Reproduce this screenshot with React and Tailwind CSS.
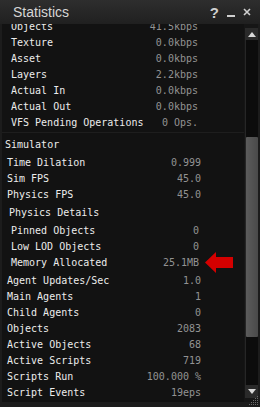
import { useState } from "react";

const network = [
  ["Objects", "41.5kbps"],
  ["Texture", "0.0kbps"],
  ["Asset", "0.0kbps"],
  ["Layers", "2.2kbps"],
  ["Actual In", "0.0kbps"],
  ["Actual Out", "0.0kbps"],
  ["VFS Pending Operations", "0 Ops."],
];

const simTop = [
  ["Time Dilation", "0.999"],
  ["Sim FPS", "45.0"],
  ["Physics FPS", "45.0"],
];

const physics = [
  ["Pinned Objects", "0"],
  ["Low LOD Objects", "0"],
  ["Memory Allocated", "25.1MB"],
];

const simBottom = [
  ["Agent Updates/Sec", "1.0"],
  ["Main Agents", "1"],
  ["Child Agents", "0"],
  ["Objects", "2083"],
  ["Active Objects", "68"],
  ["Active Scripts", "719"],
  ["Scripts Run", "100.000 %"],
  ["Script Events", "19eps"],
];

function Row({ label, value, pl, pr }) {
  return (
    <div className={`flex justify-between h-[16px] leading-[16px] ${pl} ${pr}`}>
      <span className="text-[#ececec]">{label}</span>
      <span className="text-[#929292]">{value}</span>
    </div>
  );
}

export default function App() {
  const [open] = useState(true);

  return (
    <div className="relative w-[260px] h-[407px] bg-[#1c1c1c] flex flex-col overflow-hidden">
      {/* Title bar */}
      <div className="h-[24px] shrink-0 flex items-center justify-between pl-[13px] pr-[9px] bg-gradient-to-b from-[#2e2e2e] to-[#202020]">
        <span className="text-[14px] text-[#d6d6d6] font-['Liberation_Sans',sans-serif] leading-none">
          Statistics
        </span>
        <div className="flex items-center gap-[8px] text-[#cfcfcf] font-['Liberation_Sans',sans-serif]">
          <span className="text-[15px] font-bold leading-none">?</span>
          <span className="w-[8px] h-[2px] bg-[#cfcfcf] mt-[8px]" />
          <svg width="8" height="8" viewBox="0 0 8 8">
            <path d="M1 1L7 7M7 1L1 7" stroke="#cfcfcf" strokeWidth="1.6" />
          </svg>
        </div>
      </div>

      {/* Body */}
      <div className="flex flex-1 min-h-0 pl-[2px] pb-[5px]">
        <div className="relative w-[242px] bg-[#121212] overflow-hidden font-['DejaVu_Sans_Mono',monospace] text-[10px]">
          <div className="mt-[-5px]">
            {/* Network */}
            <div className="flex flex-col">
              {network.map(([l, v]) => (
                <Row key={l} label={l} value={v} pl="pl-[9px]" pr="pr-[46px]" />
              ))}
            </div>

            {/* Simulator */}
            {open && (
              <div className="mt-[1px] border-t border-[#1e1e1e] pt-[4px]">
                <div className="h-[16px] leading-[16px] pl-[3px] text-[#ececec]">Simulator</div>
                <div className="pt-[2px]">
                  {simTop.map(([l, v]) => (
                    <Row key={l} label={l} value={v} pl="pl-[5px]" pr="pr-[43px]" />
                  ))}
                </div>
                <div className="mt-[2px]">
                  <div className="h-[16px] leading-[16px] pl-[7px] text-[#ececec]">Physics Details</div>
                  <div className="pt-[2px]">
                    {physics.map(([l, v]) => (
                      <Row key={l} label={l} value={v} pl="pl-[9px]" pr="pr-[45px]" />
                    ))}
                  </div>
                </div>
                <div className="pt-[2px]">
                  {simBottom.map(([l, v]) => (
                    <Row key={l} label={l} value={v} pl="pl-[5px]" pr="pr-[43px]" />
                  ))}
                </div>
              </div>
            )}
          </div>

          {/* Red annotation arrow */}
          <svg
            className="absolute left-[203px] top-[228px]"
            width="28"
            height="21"
            viewBox="0 0 28 21"
          >
            <path d="M0 10.5L11 0V5H28V16H11V21Z" fill="#d40000" />
          </svg>
        </div>

        {/* Scrollbar */}
        <div className="relative w-[14px] flex flex-col pl-[1px] pt-[4px] bg-[#161616]">
          <div className="h-[12px] flex items-center justify-center bg-[#2a2a2a]">
            <svg width="8" height="5" viewBox="0 0 8 5">
              <path d="M0 5L4 0L8 5Z" fill="#d8d8d8" />
            </svg>
          </div>
          <div className="flex-1 flex flex-col bg-[#0c0c0c] border-l border-[#262626]">
            <div className="h-[97px]" />
            <div className="h-[200px] bg-gradient-to-r from-[#5c5c5c] to-[#4a4a4a] rounded-[1px]" />
          </div>
          <div className="h-[13px] mb-[4px] flex items-center justify-center bg-[#2a2a2a]">
            <svg width="8" height="5" viewBox="0 0 8 5">
              <path d="M0 0L8 0L4 5Z" fill="#d8d8d8" />
            </svg>
          </div>
        </div>
      </div>

      {/* Resize grip */}
      <svg className="absolute left-[249px] top-[396px]" width="10" height="10" viewBox="0 0 10 10">
        {[
          [8, 0], [6, 2], [8, 2], [4, 4], [6, 4], [8, 4],
          [2, 6], [4, 6], [6, 6], [8, 6], [0, 8], [2, 8], [4, 8], [6, 8], [8, 8],
        ].map(([x, y]) => (
          <rect key={`${x}-${y}`} x={x} y={y} width="1" height="1" fill="#6a6a6a" />
        ))}
      </svg>
    </div>
  );
}
